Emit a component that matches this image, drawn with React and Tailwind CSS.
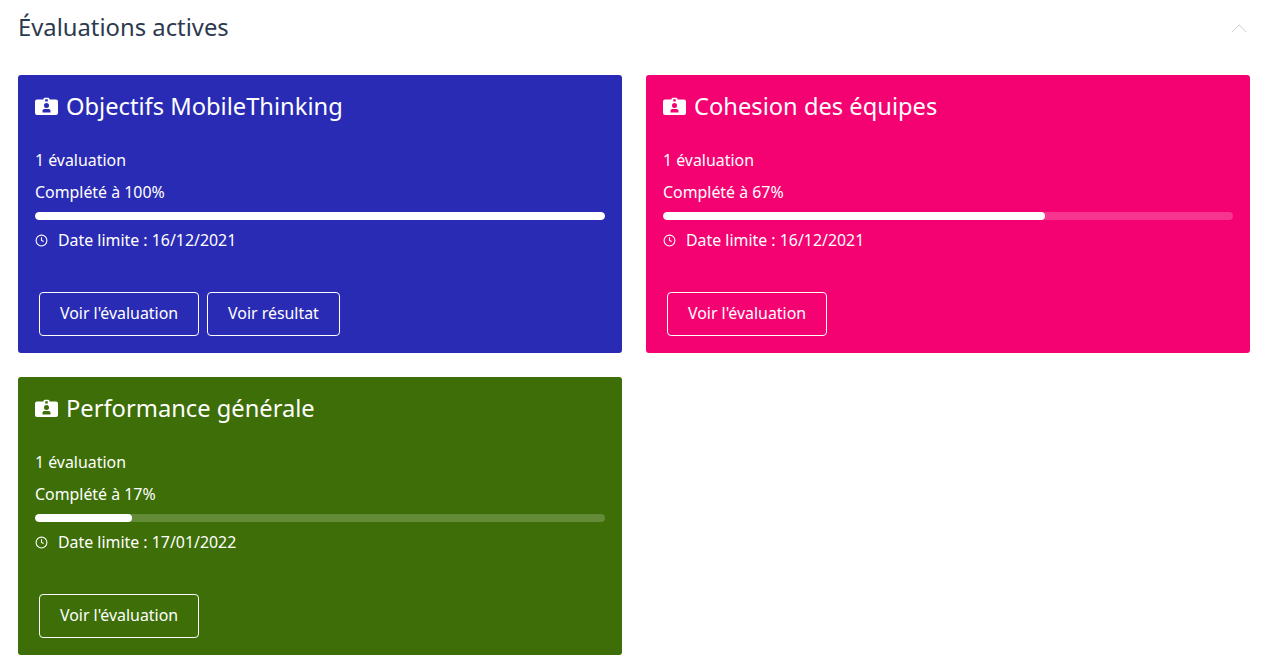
import React from 'react'

// badge icon from the card titles
const BadgeIcon = () => (
  <svg viewBox="0 0 23 18" className="w-[23px] h-[18px] shrink-0" fill="currentColor" fillRule="evenodd">
    <path d="M2 2.500h6.500V2A1.500 1.500 0 0 1 10 .8h3A1.500 1.500 0 0 1 14.500 2v.5H21a2 2 0 0 1 2 2V16a2 2 0 0 1-2 2H2a2 2 0 0 1-2-2V4.500a2 2 0 0 1 2-2zM10.200 2.200v2.300h2.600V2.200zM11.500 6a2.500 2.500 0 1 0 0 5 2.500 2.500 0 0 0 0-5zM7.500 15.500h8v-1.700c0-1.100-.9-1.800-2-1.800h-4c-1.100 0-2 .7-2 1.800z" />
  </svg>
)

const ClockIcon = () => (
  <svg viewBox="0 0 24 24" className="w-[13px] h-[13px] shrink-0" fill="none" stroke="currentColor" strokeWidth="2">
    <circle cx="12" cy="12" r="10" />
    <path d="M12 6v6l4 2" />
  </svg>
)

const Card = ({ title, percent, date, color, buttons }) => (
  <div className={`rounded-[3px] h-[278px] px-[17px] pt-[16px] text-white ${color}`}>
    <h2 className="flex items-center gap-[8px] text-[23.7px] leading-[30px]">
      <BadgeIcon />
      {title}
    </h2>
    <p className="text-[15.9px] leading-[20px] mt-[29px]">1 évaluation</p>
    <p className="text-[15.9px] leading-[20px] mt-[12px]">Complété à {percent}%</p>
    <div className="h-[8px] rounded-full bg-white/20 mt-[10px] overflow-hidden">
      <div className="h-full bg-white rounded-full" style={{ width: `${percent}%` }} />
    </div>
    <p className="flex items-center gap-[10px] text-[15.9px] leading-[20px] mt-[10px]">
      <ClockIcon />
      Date limite : {date}
    </p>
    <div className="flex gap-2 mt-[42px] ml-1">
      {buttons.map((b) => (
        <button key={b} className="h-[44px] px-5 border border-white rounded-[4px] text-[15.9px]">{b}</button>
      ))}
    </div>
  </div>
)

export default function App() {
  return (
    <div className="min-h-[667px] bg-white px-[18px] pt-[13px] font-['Noto_Sans',sans-serif]">
      <div className="flex items-center justify-between h-[30px]">
        <h1 className="text-[23.8px] text-[#2c3a4f]">Évaluations actives</h1>
        <svg viewBox="0 0 20 10" className="w-[18px] h-[9px] text-[#c8c8c8] mr-px" fill="none" stroke="currentColor" strokeWidth="1">
          <path d="M1 9l8-8 8 8" />
        </svg>
      </div>
      <div className="grid grid-cols-2 gap-x-6 gap-y-6 mt-[32px]">
        <Card title="Objectifs MobileThinking" percent={100} date="16/12/2021" color="bg-[#2a2bb4]" buttons={["Voir l'évaluation", 'Voir résultat']} />
        <Card title="Cohesion des équipes" percent={67} date="16/12/2021" color="bg-[#f50272]" buttons={["Voir l'évaluation"]} />
        <Card title="Performance générale" percent={17} date="17/01/2022" color="bg-[#3d6e07]" buttons={["Voir l'évaluation"]} />
      </div>
    </div>
  )
}
